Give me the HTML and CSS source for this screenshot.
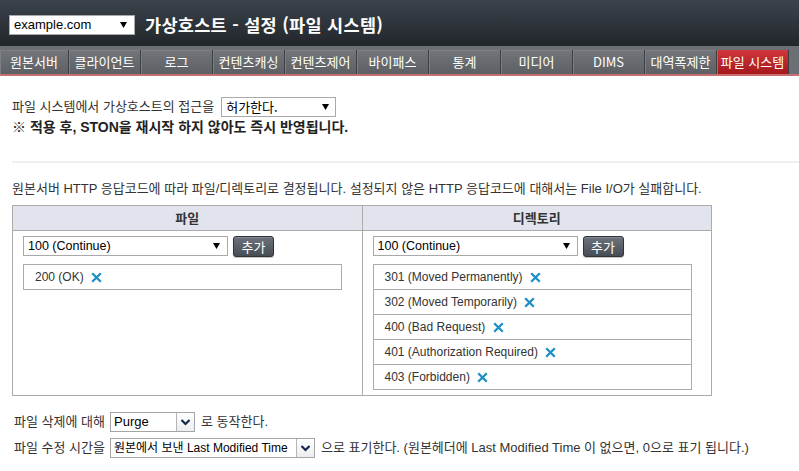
FILE: index.html
```html
<!DOCTYPE html>
<html lang="ko">
<head>
<meta charset="utf-8">
<title>가상호스트 - 설정 (파일 시스템)</title>
<link rel="stylesheet" href="styles.css">
</head>
<body>
<header class="topbar">
  <div class="select select-host">
    <span class="select-label">example.com</span>
    <svg class="tri" width="7" height="6" viewBox="0 0 7 6"><path d="M0 0H7L3.5 6Z" fill="#000"/></svg>
  </div>
  <h1 class="title">가상호스트 - 설정 (파일 시스템)</h1>
</header>
<nav class="tabs">
  <a class="tab tab-first">원본서버</a>
  <a class="tab">클라이언트</a>
  <a class="tab">로그</a>
  <a class="tab">컨텐츠캐싱</a>
  <a class="tab">컨텐츠제어</a>
  <a class="tab">바이패스</a>
  <a class="tab">통계</a>
  <a class="tab">미디어</a>
  <a class="tab">DIMS</a>
  <a class="tab">대역폭제한</a>
  <a class="tab active">파일 시스템</a>
</nav>
<main class="content">
  <div class="access-row">
    <span>파일 시스템에서 가상호스트의 접근을</span>
    <div class="select select-access">
      <span class="select-label gulim">허가한다.</span>
      <svg class="tri" width="7" height="6" viewBox="0 0 7 6"><path d="M0 0H7L3.5 6Z" fill="#000"/></svg>
    </div>
  </div>
  <p class="notice">※ 적용 후, STON을 재시작 하지 않아도 즉시 반영됩니다.</p>
  <hr class="divider">
  <p class="desc">원본서버 HTTP 응답코드에 따라 파일/디렉토리로 결정됩니다. 설정되지 않은 HTTP 응답코드에 대해서는 File I/O가 실패합니다.</p>
  <table class="codes">
    <thead>
      <tr><th>파일</th><th>디렉토리</th></tr>
    </thead>
    <tbody>
      <tr>
        <td>
          <div class="pick-row">
            <div class="select select-code">
              <span class="select-label">100 (Continue)</span>
              <svg class="tri" width="7" height="6" viewBox="0 0 7 6"><path d="M0 0H7L3.5 6Z" fill="#000"/></svg>
            </div>
            <button class="btn-add">추가</button>
          </div>
          <ul class="code-list">
            <li>200 (OK) <svg class="x" width="11" height="11" viewBox="0 0 11 11"><path d="M1.2 1.2L9.8 9.8M9.8 1.2L1.2 9.8" stroke="#1b8fc6" stroke-width="2.3"/></svg></li>
          </ul>
        </td>
        <td>
          <div class="pick-row">
            <div class="select select-code">
              <span class="select-label">100 (Continue)</span>
              <svg class="tri" width="7" height="6" viewBox="0 0 7 6"><path d="M0 0H7L3.5 6Z" fill="#000"/></svg>
            </div>
            <button class="btn-add">추가</button>
          </div>
          <ul class="code-list">
            <li>301 (Moved Permanently) <svg class="x" width="11" height="11" viewBox="0 0 11 11"><path d="M1.2 1.2L9.8 9.8M9.8 1.2L1.2 9.8" stroke="#1b8fc6" stroke-width="2.3"/></svg></li>
            <li>302 (Moved Temporarily) <svg class="x" width="11" height="11" viewBox="0 0 11 11"><path d="M1.2 1.2L9.8 9.8M9.8 1.2L1.2 9.8" stroke="#1b8fc6" stroke-width="2.3"/></svg></li>
            <li>400 (Bad Request) <svg class="x" width="11" height="11" viewBox="0 0 11 11"><path d="M1.2 1.2L9.8 9.8M9.8 1.2L1.2 9.8" stroke="#1b8fc6" stroke-width="2.3"/></svg></li>
            <li>401 (Authorization Required) <svg class="x" width="11" height="11" viewBox="0 0 11 11"><path d="M1.2 1.2L9.8 9.8M9.8 1.2L1.2 9.8" stroke="#1b8fc6" stroke-width="2.3"/></svg></li>
            <li>403 (Forbidden) <svg class="x" width="11" height="11" viewBox="0 0 11 11"><path d="M1.2 1.2L9.8 9.8M9.8 1.2L1.2 9.8" stroke="#1b8fc6" stroke-width="2.3"/></svg></li>
          </ul>
        </td>
      </tr>
    </tbody>
  </table>
  <div class="options">
    <span class="opt-label">파일 삭제에 대해</span>
    <div class="opt-field">
      <div class="cselect cselect-purge">
        <span class="cselect-label">Purge</span>
        <span class="cselect-btn"><svg width="11" height="8" viewBox="0 0 11 8"><path d="M1.5 2L5.5 6L9.5 2" fill="none" stroke="#16264a" stroke-width="2.2"/></svg></span>
      </div>
      <span>로 동작한다.</span>
    </div>
    <span class="opt-label">파일 수정 시간을</span>
    <div class="opt-field">
      <div class="cselect cselect-time">
        <span class="cselect-label small">원본에서 보낸 Last Modified Time</span>
        <span class="cselect-btn"><svg width="11" height="8" viewBox="0 0 11 8"><path d="M1.5 2L5.5 6L9.5 2" fill="none" stroke="#16264a" stroke-width="2.2"/></svg></span>
      </div>
      <span>으로 표기한다. (원본헤더에 Last Modified Time 이 없으면, 0으로 표기 됩니다.)</span>
    </div>
  </div>
</main>
</body>
</html>
```

FILE: styles.css
```css
html, body {
  margin: 0;
  padding: 0;
}

body {
  background: #ffffff;
  color: #333333;
  font-family: "Liberation Sans", "Noto Sans CJK KR", sans-serif;
  font-size: 12px;
  line-height: 16px;
}

/* ---------- top bar ---------- */
.topbar {
  height: 46px;
  box-sizing: border-box;
  padding: 15px 0 0 9px;
  display: flex;
  align-items: flex-start;
  gap: 10px;
  background: linear-gradient(#3c434c, #22262b);
}

.select {
  box-sizing: border-box;
  display: flex;
  align-items: center;
  justify-content: space-between;
  background: #ffffff;
  border: 1px solid #a9a9a9;
  color: #000000;
  font-family: "Liberation Sans", "Noto Sans CJK KR", sans-serif;
}

.select-host {
  width: 126px;
  height: 20px;
  padding: 0 7px 0 4px;
  font-size: 13px;
}

.tri {
  flex: none;
}

.title {
  margin: 0;
  font-family: "Noto Sans CJK KR", sans-serif;
  font-size: 17.5px;
  font-weight: bold;
  line-height: 20px;
  color: #ffffff;
  letter-spacing: 0.3px;
}

/* ---------- tabs ---------- */
.tabs {
  display: flex;
  padding-top: 4px;
  background: #6c7074;
  border-bottom: 2px solid #c56f6f;
}

.tab {
  box-sizing: border-box;
  width: 72px;
  height: 24px;
  display: flex;
  align-items: center;
  justify-content: center;
  color: #ffffff;
  font-family: "Noto Sans CJK KR", sans-serif;
  font-size: 13px;
  border-right: 1px solid #3a3e42;
  box-shadow: inset 1px 0 0 #7c8084, inset 0 1px 0 #7e8286;
  background: linear-gradient(#72767a, #5c6064);
  white-space: nowrap;
}

.tab-first {
  width: 69px;
}

.tab.active {
  background: linear-gradient(#d0373b, #a5181c);
  box-shadow: inset 1px 0 0 #d95a5d;
}

/* ---------- content ---------- */
.content {
  padding: 21px 0 0 12px;
}

.access-row {
  display: flex;
  align-items: center;
  gap: 7px;
  height: 20px;
  font-size: 13px;
}

.select-access {
  width: 115px;
  height: 20px;
  padding: 0 6px 0 4px;
  font-size: 13px;
}

.gulim {
  font-family: "Noto Sans CJK KR", sans-serif;
  font-size: 13px;
}

.notice {
  margin: 0;
  font-size: 14px;
  font-weight: bold;
  line-height: 20px;
  color: #222222;
}

.divider {
  margin: 24px 0 0 0;
  border: 0;
  height: 2px;
  background: #efefef;
}

.desc {
  margin: 18px 0 8px 0;
  font-size: 13px;
  line-height: 16px;
  color: #333333;
}

/* ---------- table ---------- */
.codes {
  width: 700px;
  border-collapse: collapse;
  table-layout: fixed;
}

.codes th {
  height: 24px;
  padding: 0;
  background: #e1e4ec;
  border: 1px solid #acacac;
  font-weight: bold;
  font-family: "Noto Sans CJK KR", sans-serif;
  font-size: 13px;
  color: #333333;
}

.codes td {
  vertical-align: top;
  padding: 5px 10px 5px 10px;
  border: 1px solid #acacac;
}

.pick-row {
  display: flex;
  align-items: flex-start;
  gap: 5px;
  height: 21px;
}

.select-code {
  width: 205px;
  height: 20px;
  padding: 0 7px 0 4px;
  font-size: 12.5px;
}

.btn-add {
  box-sizing: border-box;
  width: 41px;
  height: 21px;
  padding: 0;
  border: 1px solid #2f3337;
  border-radius: 3px;
  background: linear-gradient(#6c737b, #474d54);
  box-shadow: 0 1px 1px rgba(0, 0, 0, 0.25), inset 0 1px 0 #848a92;
  color: #ffffff;
  font-family: "Noto Sans CJK KR", sans-serif;
  font-size: 13px;
  line-height: 18px;
}

.code-list {
  list-style: none;
  margin: 7px 0 0 0;
  padding: 0;
  width: 319px;
  border: 1px solid #acacac;
  box-sizing: border-box;
}

.code-list li {
  height: 24px;
  display: flex;
  align-items: center;
  gap: 4px;
  padding-left: 11px;
  border-top: 1px solid #acacac;
  color: #333333;
  white-space: pre;
}

.code-list li:first-child {
  border-top: 0;
}

.x {
  flex: none;
}

/* ---------- options ---------- */
.options {
  margin-top: 16px;
  padding-left: 2px;
  display: grid;
  grid-template-columns: 96px auto;
  row-gap: 6px;
  align-items: center;
  justify-content: start;
  font-size: 13px;
}

.opt-field {
  display: flex;
  align-items: center;
  gap: 6px;
}

.cselect {
  box-sizing: border-box;
  height: 20px;
  display: flex;
  align-items: center;
  justify-content: space-between;
  border: 1px solid #a5a5a5;
  background: #ffffff;
  color: #000000;
  padding-left: 3px;
}

.cselect-purge {
  width: 85px;
}

.cselect-time {
  width: 205px;
}

.cselect-label {
  font-size: 13px;
  white-space: nowrap;
}

.cselect-label.small {
  font-size: 12px;
}

.cselect-btn {
  box-sizing: border-box;
  width: 18px;
  height: 18px;
  display: flex;
  align-items: center;
  justify-content: center;
  border-left: 1px solid #b5b5b5;
  background: linear-gradient(#ffffff, #ecedef);
}
```
